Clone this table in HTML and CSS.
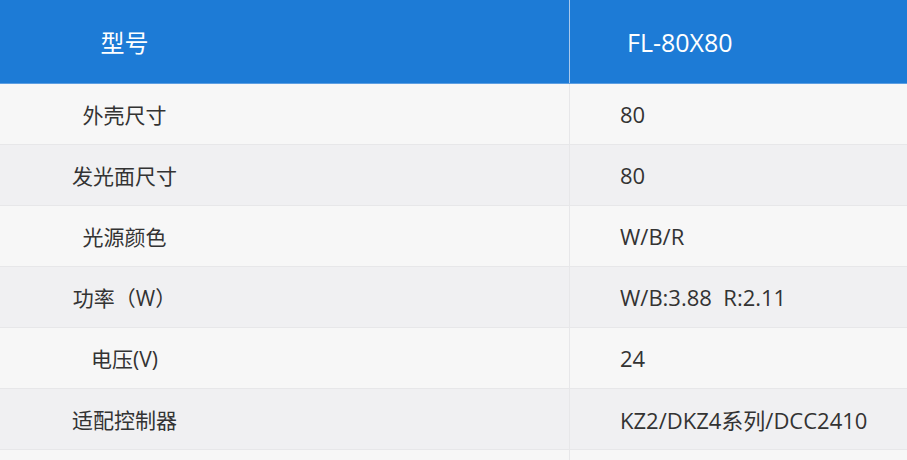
FILE: index.html
```html
<!DOCTYPE html>
<html lang="zh">
<head>
<meta charset="utf-8">
<link rel="stylesheet" href="styles.css">
</head>
<body>
<div class="table">
  <div class="row head">
    <div class="cell key">型号</div>
    <div class="cell val">FL-80X80</div>
  </div>
  <div class="row odd">
    <div class="cell key">外壳尺寸</div>
    <div class="cell val">80</div>
  </div>
  <div class="row even">
    <div class="cell key">发光面尺寸</div>
    <div class="cell val">80</div>
  </div>
  <div class="row odd">
    <div class="cell key">光源颜色</div>
    <div class="cell val">W/B/R</div>
  </div>
  <div class="row even">
    <div class="cell key">功率（W）</div>
    <div class="cell val">W/B:3.88&nbsp; R:2.11</div>
  </div>
  <div class="row odd">
    <div class="cell key">电压(V)</div>
    <div class="cell val">24</div>
  </div>
  <div class="row even">
    <div class="cell key">适配控制器</div>
    <div class="cell val">KZ2/DKZ4系列/DCC2410</div>
  </div>
  <div class="row odd">
    <div class="cell key"></div>
    <div class="cell val"></div>
  </div>
</div>
</body>
</html>
```
FILE: styles.css
```css
html, body {
  margin: 0;
  padding: 0;
  background: #f7f7f7;
}
body {
  font-family: "Open Sans", "Noto Sans CJK SC", sans-serif;
  color: #333;
  overflow: hidden;
  height: 460px;
}
.table {
  display: flex;
  flex-direction: column;
  width: 907px;
}
.row {
  display: grid;
  grid-template-columns: 570px 1fr;
  height: 60px;
  flex: none;
  border-bottom: 1px solid #e7e7e9;
  font-size: 22px;
}
.row.head {
  height: 83px;
  background: #1d7bd6;
  color: #fff;
  font-size: 25px;
  border-bottom: 1px solid #5d9fe2;
}
.row.odd { background: #f7f7f7; }
.row.even { background: #f0f0f2; }
.cell {
  display: flex;
  align-items: center;
  white-space: pre;
}
.key {
  justify-content: center;
  padding-right: 320px;
  border-right: 1px solid #e7e7e9;
  font-size: 21px;
}
.head .key {
  border-right-color: #a9c9ec;
  font-size: 24px;
}
.val {
  padding-left: 50px;
}
.head .val {
  padding-left: 57px;
}
```
